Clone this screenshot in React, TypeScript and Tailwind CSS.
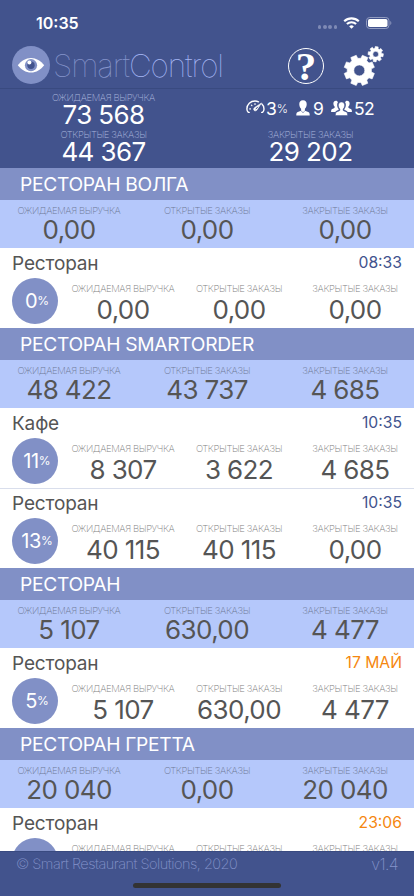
import clsx from "clsx"

type Outlet = {
  name: string
  time: string
  stale?: boolean
  percent: number
  values: string[]
}

type Group = {
  title: string
  totals: string[]
  outlets: Outlet[]
}

const labels = ["ОЖИДАЕМАЯ ВЫРУЧКА", "ОТКРЫТЫЕ ЗАКАЗЫ", "ЗАКРЫТЫЕ ЗАКАЗЫ"]

const groups: Group[] = [
  {
    title: "РЕСТОРАН ВОЛГА",
    totals: ["0,00", "0,00", "0,00"],
    outlets: [{ name: "Ресторан", time: "08:33", percent: 0, values: ["0,00", "0,00", "0,00"] }],
  },
  {
    title: "РЕСТОРАН SMARTORDER",
    totals: ["48 422", "43 737", "4 685"],
    outlets: [
      { name: "Кафе", time: "10:35", percent: 11, values: ["8 307", "3 622", "4 685"] },
      { name: "Ресторан", time: "10:35", percent: 13, values: ["40 115", "40 115", "0,00"] },
    ],
  },
  {
    title: "РЕСТОРАН",
    totals: ["5 107", "630,00", "4 477"],
    outlets: [{ name: "Ресторан", time: "17 МАЙ", stale: true, percent: 5, values: ["5 107", "630,00", "4 477"] }],
  },
  {
    title: "РЕСТОРАН ГРЕТТА",
    totals: ["20 040", "0,00", "20 040"],
    outlets: [{ name: "Ресторан", time: "23:06", stale: true, percent: 5, values: ["20 040", "0,00", "20 040"] }],
  },
]

// Outline of an eight-toothed gear around (cx, cy)
function gearPath(cx: number, cy: number, outer: number, inner: number, hole: number, turn: number) {
  const points: string[] = []
  for (let i = 0; i < 8; i++) {
    const corners: [number, number][] = [
      [-15, inner],
      [-11, outer],
      [11, outer],
      [15, inner],
    ]
    for (const [offset, r] of corners) {
      const a = ((i * 45 + turn + offset) * Math.PI) / 180
      points.push(`${(cx + r * Math.cos(a)).toFixed(2)} ${(cy + r * Math.sin(a)).toFixed(2)}`)
    }
  }
  return `M${points.join("L")}ZM${cx - hole} ${cy}a${hole} ${hole} 0 1 0 ${hole * 2} 0a${hole} ${hole} 0 1 0 ${-hole * 2} 0Z`
}

function GearsIcon() {
  return (
    <svg className="h-[42px] w-[42px]" viewBox="0 0 42 42" fill="#fff" stroke="#fff" strokeWidth="0.6" strokeLinejoin="round" fillRule="evenodd">
      <path d={gearPath(17.3, 24.4, 15.4, 12.2, 5.5, 22.5)} />
      <path d={gearPath(33.7, 8.2, 7.7, 5.9, 2.9, 8)} />
    </svg>
  )
}

function EyeIcon() {
  return (
    <svg className="h-[38px] w-[38px]" viewBox="0 0 38 38">
      <circle cx="19" cy="19" r="19" fill="#8190c6" />
      <path d="M5.8 19.3C9.2 14.8 13.8 11.9 19 11.9s9.8 2.9 13.2 7.4C28.8 23.7 24.2 26.6 19 26.6S9.2 23.7 5.8 19.3Z" fill="#fff" />
      <circle cx="19" cy="19.2" r="6.1" fill="#8190c6" />
      <circle cx="19" cy="19.2" r="3.7" fill="#42538d" />
      <circle cx="17.4" cy="16.6" r="2" fill="#fff" />
    </svg>
  )
}

function SpeedIcon() {
  return (
    <svg className="h-[14px] w-[19px]" viewBox="0 0 19 14" fill="none" stroke="#fff" strokeWidth="1.4" strokeLinecap="round">
      <path d="M3.2 12.4H2.4C1.4 11.6.9 10.4.9 8.9.9 4.3 4.5 1 9 1c1.3 0 2.5.3 3.5.8M15.9 4c1.5 1.3 2.1 3 2.1 4.9 0 1.5-.5 2.7-1.5 3.5h-.8" />
      <path d="M3.7 8.9h.8M5.4 5.2l.5.5M9 3.7v.7" strokeWidth="1.2" />
      <path d="M15.3 3.3 10.9 10c-.8 1-2.1 1.1-2.8.4-.8-.8-.5-2 .5-2.8Z" fill="#fff" strokeWidth=".6" />
      <path d="m10 8.9 1.6-1.8" stroke="#42538d" strokeWidth="1" />
    </svg>
  )
}

function PersonIcon() {
  return (
    <svg className="h-[16px] w-[14px]" viewBox="0 0 14 16" fill="#fff">
      <path d="M7 .2C4.400.2 3.100 2 3.300 4.500c.1 1.900.8 3.300 1.800 4.300v2L1.800 12C.4 12.500.3 13.800.3 15.600h13.400c0-1.800-.1-3.100-1.500-3.600l-3.300-1.200v-2c1-1 1.700-2.400 1.800-4.300C10.900 2 9.600.2 7 .2Z" />
      <path d="m5.200 11 1.800 1.700L8.800 11" fill="none" stroke="#42538d" strokeWidth=".6" />
    </svg>
  )
}

function PeopleIcon() {
  return (
    <svg className="h-[16px] w-[21px]" viewBox="0 0 21 16" fill="#fff">
      <path d="M5 .7C3.100.7 2.200 2 2.400 3.900c.1 1.200.5 2.100 1.200 2.700v1.100C3 8.500.9 8.600.4 9.700.1 10.300.1 11 .1 12h4.200c.6-1.200 2-1.600 3.300-2V9C6.500 7.700 6 5.900 6.200 4.300c.1-.9.3-1.500.8-2C6.600 1.200 5.900.7 5 .7ZM16 .7c1.900 0 2.800 1.300 2.600 3.200-.1 1.200-.5 2.100-1.200 2.700v1.100c.6.8 2.700.9 3.200 2 .3.600.3 1.300.3 2.300h-4.200c-.6-1.200-2-1.600-3.300-2V9c1.100-1.300 1.600-3.100 1.400-4.700-.1-.9-.3-1.500-.8-2 .4-1.100 1.100-1.600 2-1.600Z" />
      <path d="M10.500 2C8.400 2 7.200 3.500 7.400 5.600c.1 1.600.6 2.700 1.500 3.400v1.400c-.7.8-3.300 1-4 2.200-.4.8-.5 1.900-.5 3h12.200c0-1.100-.1-2.200-.5-3-.7-1.200-3.300-1.400-4-2.200V9c.9-.7 1.400-1.800 1.500-3.400C13.800 3.500 12.600 2 10.500 2Z" stroke="#42538d" strokeWidth=".5" />
    </svg>
  )
}

function StatusBar() {
  return (
    <div className="flex h-[46px] items-center justify-between pr-[22px] pl-9">
      <span className="text-[16px] font-semibold leading-none text-white">10:35</span>
      <div className="flex items-center">
        <div className="mt-2 flex gap-[1.8px]">
          {[0, 1, 2, 3].map((dot) => (
            <span key={dot} className="size-[3.4px] rounded-full bg-[#7e8ab5]" />
          ))}
        </div>
        <svg className="ml-[6px] h-[12px] w-[17px]" viewBox="0 0 17 12" fill="none" stroke="#fff" strokeWidth="2.1">
          <path d="M1.2 4.3a10.5 10.5 0 0 1 14.6 0" />
          <path d="M3.9 7.1a6.6 6.6 0 0 1 9.2 0" />
          <path d="M8.5 11.8 6.2 9.4a3.3 3.3 0 0 1 4.6 0Z" fill="#fff" stroke="none" />
        </svg>
        <svg className="ml-[6px] h-[12px] w-[26px]" viewBox="0 0 26 12">
          <rect x=".5" y=".5" width="22.5" height="11" rx="3.2" fill="none" stroke="#929cc0" />
          <rect x="2" y="2" width="19.5" height="8" rx="1.8" fill="#fff" />
          <path d="M24.3 4v4c1.4-.6 1.4-3.4 0-4Z" fill="#929cc0" />
        </svg>
      </div>
    </div>
  )
}

function Metric({ label, value, dark, outlet }: { label: string; value: string; dark?: boolean; outlet?: boolean }) {
  return (
    <div className="flex flex-1 flex-col items-center whitespace-nowrap">
      <span
        className={clsx(
          "text-[9.5px] font-extralight leading-[11px] tracking-[-0.4px]",
          dark ? "text-[#a9b5dc]" : outlet ? "text-[#808080]" : "text-[#6e7996]",
        )}
      >
        {label}
      </span>
      <span
        className={clsx(
          "text-[26px] leading-[24px] tracking-[-0.6px]",
          dark ? "text-white" : "text-[#555555]",
          outlet ? "mt-[4px]" : dark ? "" : "mt-[2px]",
        )}
      >
        {value}
      </span>
    </div>
  )
}

function OutletRow({ outlet, divided }: { outlet: Outlet; divided: boolean }) {
  return (
    <div className={clsx("h-20 bg-white", divided && "border-t border-[#d9deec]")}>
      <div className={clsx("flex h-[30px] items-center justify-between px-3", divided && "-mt-px")}>
        <span className="mt-[2px] text-[19px] tracking-[-0.15px] text-[#555555]">{outlet.name}</span>
        <span className={clsx("text-[15.7px]", outlet.stale ? "text-[#f5870f]" : "text-[#42538d]")}>{outlet.time}</span>
      </div>
      <div className="flex">
        <div className="ml-3 flex size-[46px] shrink-0 items-center justify-center rounded-full bg-[#8190c6] pl-[4px] text-white">
          <span className="text-[20px] tracking-[-0.4px]">{outlet.percent}</span>
          <span className="text-[12px]">%</span>
        </div>
        <div className="ml-[7px] flex flex-1 pt-[5px] pr-px">
          {labels.map((label, i) => (
            <Metric key={label} label={label} value={outlet.values[i]} outlet />
          ))}
        </div>
      </div>
    </div>
  )
}

export default function App() {
  return (
    <div className="flex h-[896px] w-[414px] flex-col overflow-hidden bg-[#42538d] font-['Inter',sans-serif]">
      <header className="h-[168px] shrink-0">
        <StatusBar />
        <div className="flex h-[43px] items-start border-b border-[#394a80] pl-3">
          <EyeIcon />
          <h1 className="ml-[3px] text-[31.5px] font-thin leading-[40px] tracking-[-1.1px] text-[#8594cb]">
            Smart<span className="text-[#a6b7f5]">Control</span>
          </h1>
          <div className="ml-auto flex pr-[30px]">
            <div className="mt-[2px] mr-[18px] flex size-[36px] items-center justify-center rounded-full border-[1.5px] border-white font-['Liberation_Serif',serif] text-[41px] font-bold leading-none text-white">
              ?
            </div>
            <GearsIcon />
          </div>
        </div>
        <div className="flex pt-[3px]">
          <div className="flex flex-1 flex-col gap-[2px]">
            <Metric label={labels[0]} value="73 568" dark />
            <Metric label={labels[1]} value="44 367" dark />
          </div>
          <div className="flex flex-1 flex-col">
            <div className="flex h-[37px] items-start pt-[8px] pl-[39px] text-[17.5px] leading-[18px] text-white">
              <SpeedIcon />
              <span className="ml-px">3</span>
              <span className="text-[12px] font-light">%</span>
              <span className="ml-[8px]"><PersonIcon /></span>
              <span className="ml-[3px]">9</span>
              <span className="ml-[7px]"><PeopleIcon /></span>
              <span className="ml-[2px] tracking-[-0.5px]">52</span>
            </div>
            <Metric label={labels[2]} value="29 202" dark />
          </div>
        </div>
      </header>

      <main className="min-h-0 flex-1 overflow-hidden">
        {groups.map((group) => (
          <section key={group.title}>
            <h2 className="flex h-8 items-center bg-[#8190c6] pt-px pl-5 text-[19.2px] tracking-[-0.3px] text-white">
              {group.title}
            </h2>
            <div className="flex h-12 bg-[#b5c8fb] pt-[5px]">
              {labels.map((label, i) => (
                <Metric key={label} label={label} value={group.totals[i]} />
              ))}
            </div>
            {group.outlets.map((outlet, i) => (
              <OutletRow key={i} outlet={outlet} divided={i > 0} />
            ))}
          </section>
        ))}
      </main>

      <footer className="flex h-[45px] shrink-0 flex-col items-center justify-between border-t border-[#394a80] pb-[8px]">
        <div className="flex w-full justify-between px-4 pt-[2px] font-extralight leading-[20px] text-[#8594cb]">
          <span className="text-[14.5px] tracking-[-0.5px]">© Smart Restaurant Solutions, 2020</span>
          <span className="text-[16px] tracking-[-0.6px]">v1.4</span>
        </div>
        <div className="h-[5px] w-[148px] rounded-full bg-[#333333]" />
      </footer>
    </div>
  )
}
